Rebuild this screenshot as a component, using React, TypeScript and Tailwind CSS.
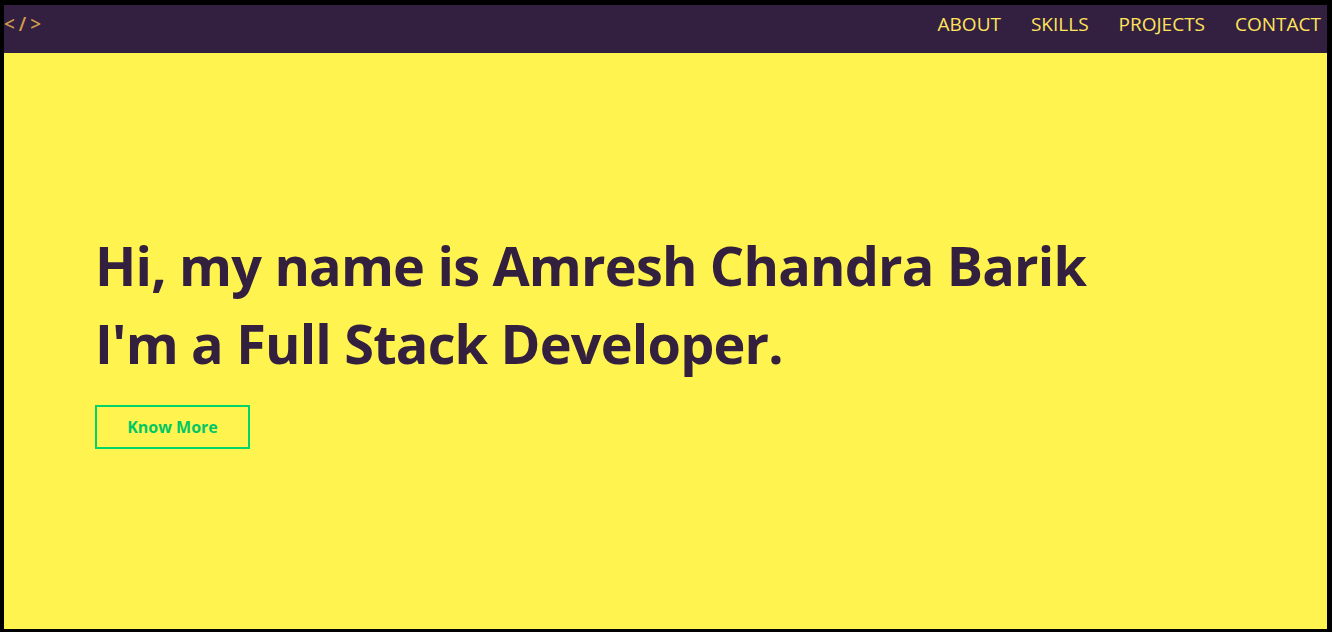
export default function App() {
    return (
        <div className="w-[1332px] h-[632px] bg-black pt-[5px] pl-[4px] pr-[5px] pb-[3px] overflow-hidden">
            <div className="flex flex-col h-full bg-[#fff350]" style={{ fontFamily: '"Open Sans", "Noto Sans", sans-serif' }}>
                {/* Navbar */}
                <nav className="h-[48px] shrink-0 bg-[#332040] flex items-start justify-between overflow-hidden">
                    <div className="mt-[6px] text-[19px] leading-[26px] tracking-[-0.5px] text-[#d29c4c] font-semibold">
                        &lt; / &gt;
                    </div>
                    <ul className="flex items-center gap-[30px] pr-[6px] mt-[5px]">
                        {['ABOUT', 'SKILLS', 'PROJECTS', 'CONTACT'].map((item) => (
                            <li key={item} className="text-[19px] leading-[28px] text-[#ffe45c]">
                                {item}
                            </li>
                        ))}
                    </ul>
                </nav>

                {/* Hero */}
                <section className="flex-1 pl-[91px] pt-[173px]">
                    <h1 className="text-[54px] leading-[78px] font-bold tracking-[-0.8px] text-[#33203f]">
                        Hi, my name is Amresh Chandra Barik
                        <br />
                        I'm a Full Stack Developer.
                    </h1>
                    <button className="mt-[23px] w-[155px] h-[44px] border-2 border-[#00d46a] text-[#00c864] text-[16px] font-bold">
                        Know More
                    </button>
                </section>
            </div>
        </div>
    );
}
